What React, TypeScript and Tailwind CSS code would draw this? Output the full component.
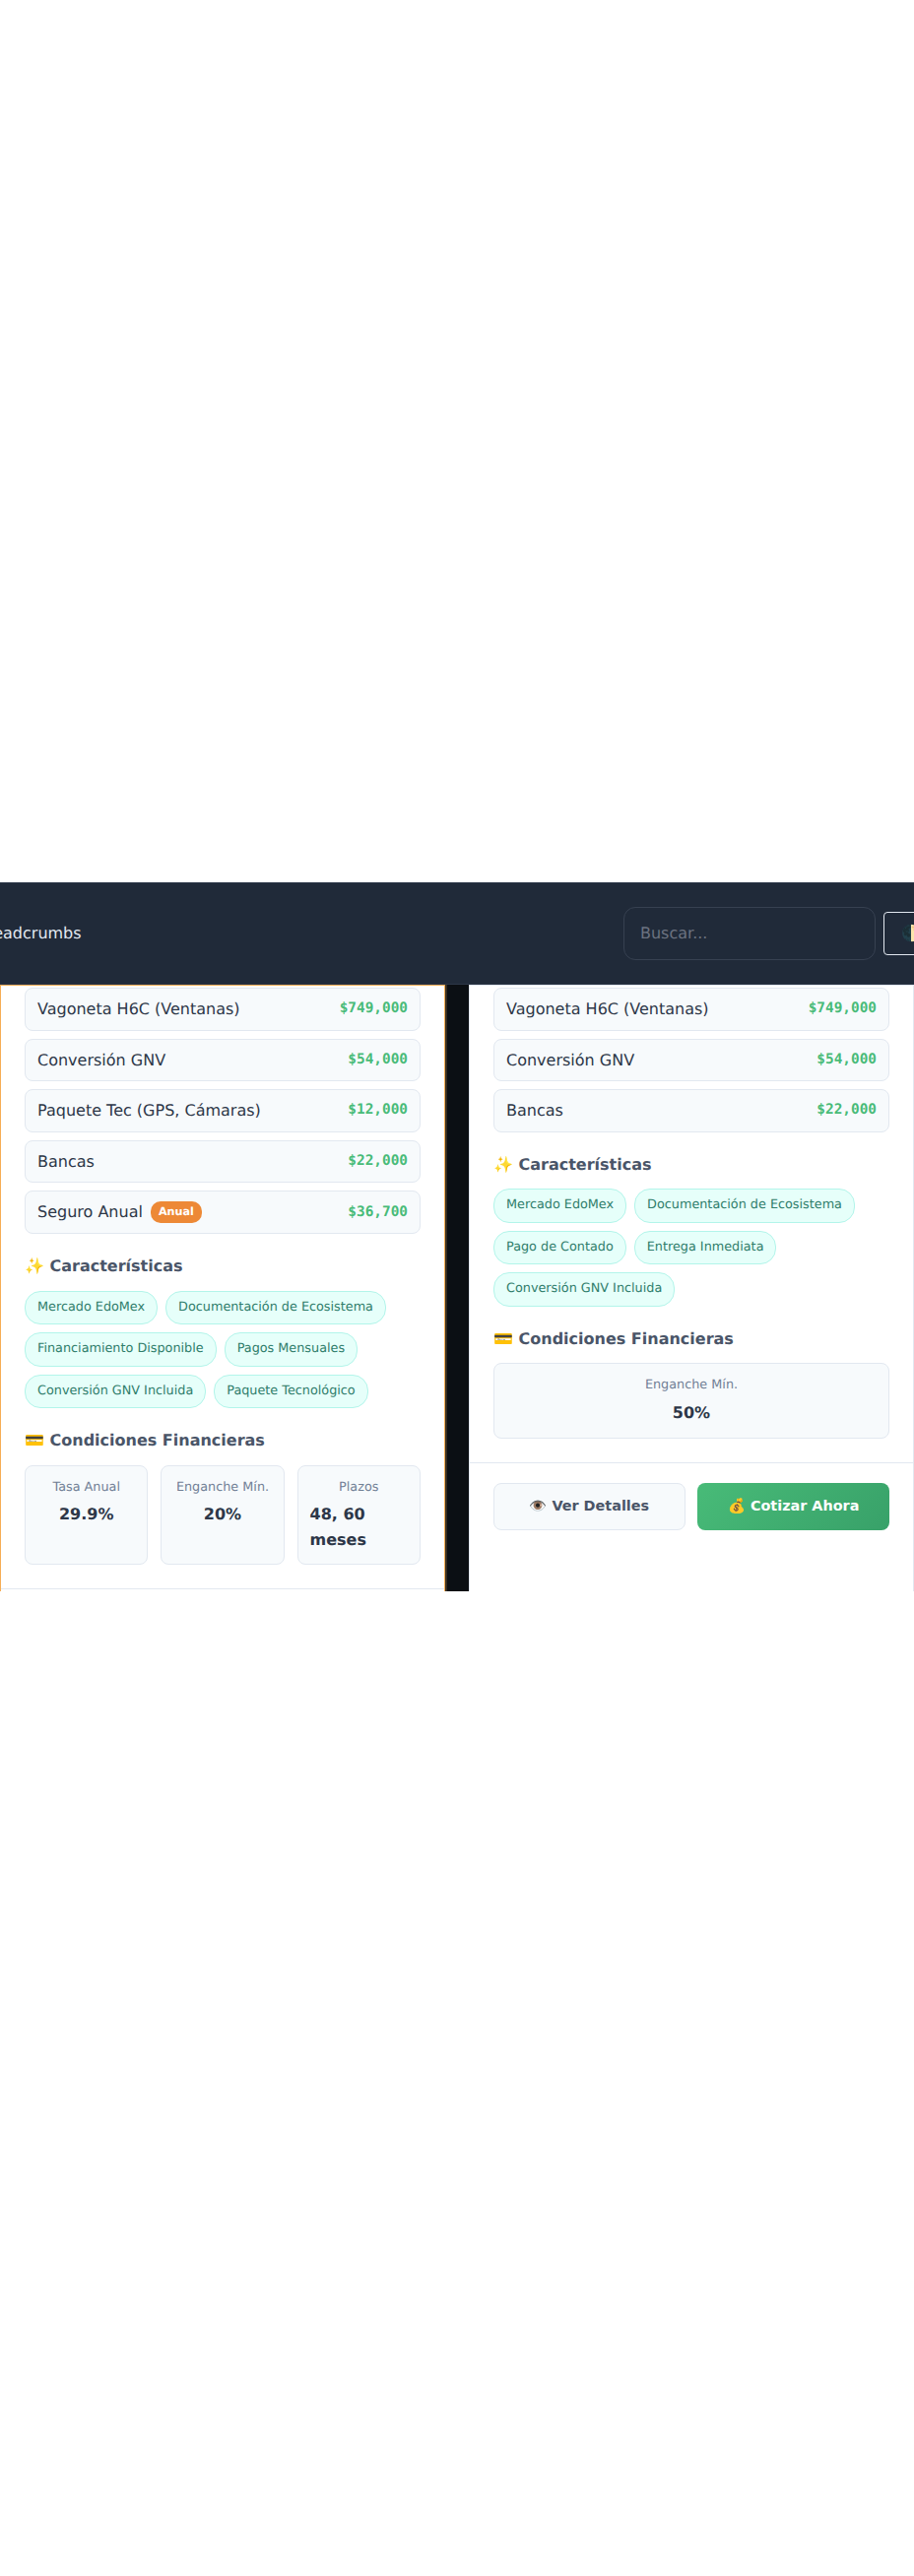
import React from "react";

type Item = { name: string; price: string; badge?: string };

const sans = "font-['DejaVu_Sans','Noto_Color_Emoji',sans-serif]";

function Emoji({ children }: { children: string }) {
  return <span className="font-['Noto_Color_Emoji',sans-serif] font-normal">{children}</span>;
}

function Row({ item }: { item: Item }) {
  return (
    <div className="flex items-center justify-between rounded-lg border border-[#e2e8f0] bg-[#f7fafc] px-3 py-2">
      <span className="flex items-center gap-2 text-[16px] leading-[25.6px] text-[#2d3748]">
        {item.name}
        {item.badge && (
          <span className="rounded-[10px] bg-[#ed8936] px-2 py-0.5 text-[11.2px] leading-[17.92px] font-bold text-white">
            {item.badge}
          </span>
        )}
      </span>
      <span className="font-['DejaVu_Sans_Mono',monospace] text-[14.4px] leading-[23px] font-bold text-[#48bb78]">{item.price}</span>
    </div>
  );
}

function Heading({ icon, children }: { icon: string; children: React.ReactNode }) {
  return (
    <h4 className="mt-5 mb-3 text-[16px] leading-[25.6px] font-bold text-[#4a5568]">
      <Emoji>{icon}</Emoji> {children}
    </h4>
  );
}

function Chip({ label }: { label: string }) {
  return (
    <span className="rounded-[16px] border border-[#b2f5ea] bg-[#e6fffa] px-3 py-1.5 text-[12.8px] leading-[20.48px] text-[#2f7d6b]">
      {label}
    </span>
  );
}

function Stat({ label, value }: { label: string; value: string }) {
  return (
    <div className="flex flex-col items-center gap-1 rounded-lg border border-[#e2e8f0] bg-[#f7fafc] p-3">
      <span className="text-[12.8px] leading-[20.48px] text-[#718096]">{label}</span>
      <span className="text-[16px] leading-[25.6px] font-bold text-[#2d3748]">{value}</span>
    </div>
  );
}

function Card({
  items,
  chips,
  stats,
  accent,
  footer,
}: {
  items: Item[];
  chips: string[];
  stats: { label: string; value: string }[];
  accent?: boolean;
  footer?: boolean;
}) {
  return (
    <div
      className={
        accent
          ? "flex h-[640px] flex-col border border-[#f6ad55] bg-white shadow-[0_0_0_2px_rgba(246,173,85,0.2)]"
          : "flex h-[640px] flex-col border border-[#e2e8f0] bg-white"
      }
    >
      <div className="flex flex-col px-6 pt-[2px]">
        <div className="flex flex-col gap-2">
          {items.map((it) => (
            <Row key={it.name} item={it} />
          ))}
        </div>
        <Heading icon="✨">Características</Heading>
        <div className="flex flex-wrap gap-2">
          {chips.map((c) => (
            <Chip key={c} label={c} />
          ))}
        </div>
        <Heading icon="💳">Condiciones Financieras</Heading>
        <div className={stats.length > 1 ? "grid grid-cols-3 gap-[12.8px]" : "grid grid-cols-1"}>
          {stats.map((s) => (
            <Stat key={s.label} label={s.label} value={s.value} />
          ))}
        </div>
      </div>
      <div className="mt-6 border-t border-[#e2e8f0]">
        {footer && (
          <div className="grid grid-cols-2 gap-[12.8px] px-6 pt-5">
            <button className="flex h-[48.6px] items-center justify-center gap-[5px] rounded-lg border border-[#e2e8f0] bg-[#f7fafc] text-[14.4px] font-bold text-[#4a5568]">
              <Emoji>👁️</Emoji> Ver Detalles
            </button>
            <button className="flex h-[48.6px] items-center justify-center gap-[5px] rounded-lg bg-[linear-gradient(135deg,#48bb78,#38a169)] text-[14.4px] font-bold text-white">
              <Emoji>💰</Emoji> Cotizar Ahora
            </button>
          </div>
        )}
      </div>
    </div>
  );
}

export default function App() {
  return (
    <div className={`h-[2616px] w-[928px] overflow-hidden bg-white [text-rendering:geometricPrecision] ${sans}`}>
      <div className="h-[896px]" />
      <header className="flex h-[104px] items-center justify-between overflow-hidden border-y border-[#2d3748] bg-[#202a39]">
        <span className="ml-[-24px] text-[16px] leading-[25.6px] text-[#e2e8f0]">Breadcrumbs</span>
        <div className="mr-[-60px] flex items-center gap-2">
          <div className="flex h-[54px] w-[256px] items-center rounded-xl border border-[#374151] px-4 text-[16px] leading-[25.6px] text-[#6b7280]">
            Buscar...
          </div>
          <button className="flex h-[44px] w-[91px] items-center rounded-[4px] border border-[#e2e8f0] pl-[17px] text-[16px]">
            <Emoji>🌓</Emoji>
          </button>
        </div>
      </header>
      <div className="grid h-[616px] grid-cols-2 gap-6 overflow-hidden bg-[#0b0f14]">
        <Card
          accent
          items={[
            { name: "Vagoneta H6C (Ventanas)", price: "$749,000" },
            { name: "Conversión GNV", price: "$54,000" },
            { name: "Paquete Tec (GPS, Cámaras)", price: "$12,000" },
            { name: "Bancas", price: "$22,000" },
            { name: "Seguro Anual", price: "$36,700", badge: "Anual" },
          ]}
          chips={[
            "Mercado EdoMex",
            "Documentación de Ecosistema",
            "Financiamiento Disponible",
            "Pagos Mensuales",
            "Conversión GNV Incluida",
            "Paquete Tecnológico",
          ]}
          stats={[
            { label: "Tasa Anual", value: "29.9%" },
            { label: "Enganche Mín.", value: "20%" },
            { label: "Plazos", value: "48, 60 meses" },
          ]}
        />
        <Card
          footer
          items={[
            { name: "Vagoneta H6C (Ventanas)", price: "$749,000" },
            { name: "Conversión GNV", price: "$54,000" },
            { name: "Bancas", price: "$22,000" },
          ]}
          chips={["Mercado EdoMex", "Documentación de Ecosistema", "Pago de Contado", "Entrega Inmediata", "Conversión GNV Incluida"]}
          stats={[{ label: "Enganche Mín.", value: "50%" }]}
        />
      </div>
    </div>
  );
}
